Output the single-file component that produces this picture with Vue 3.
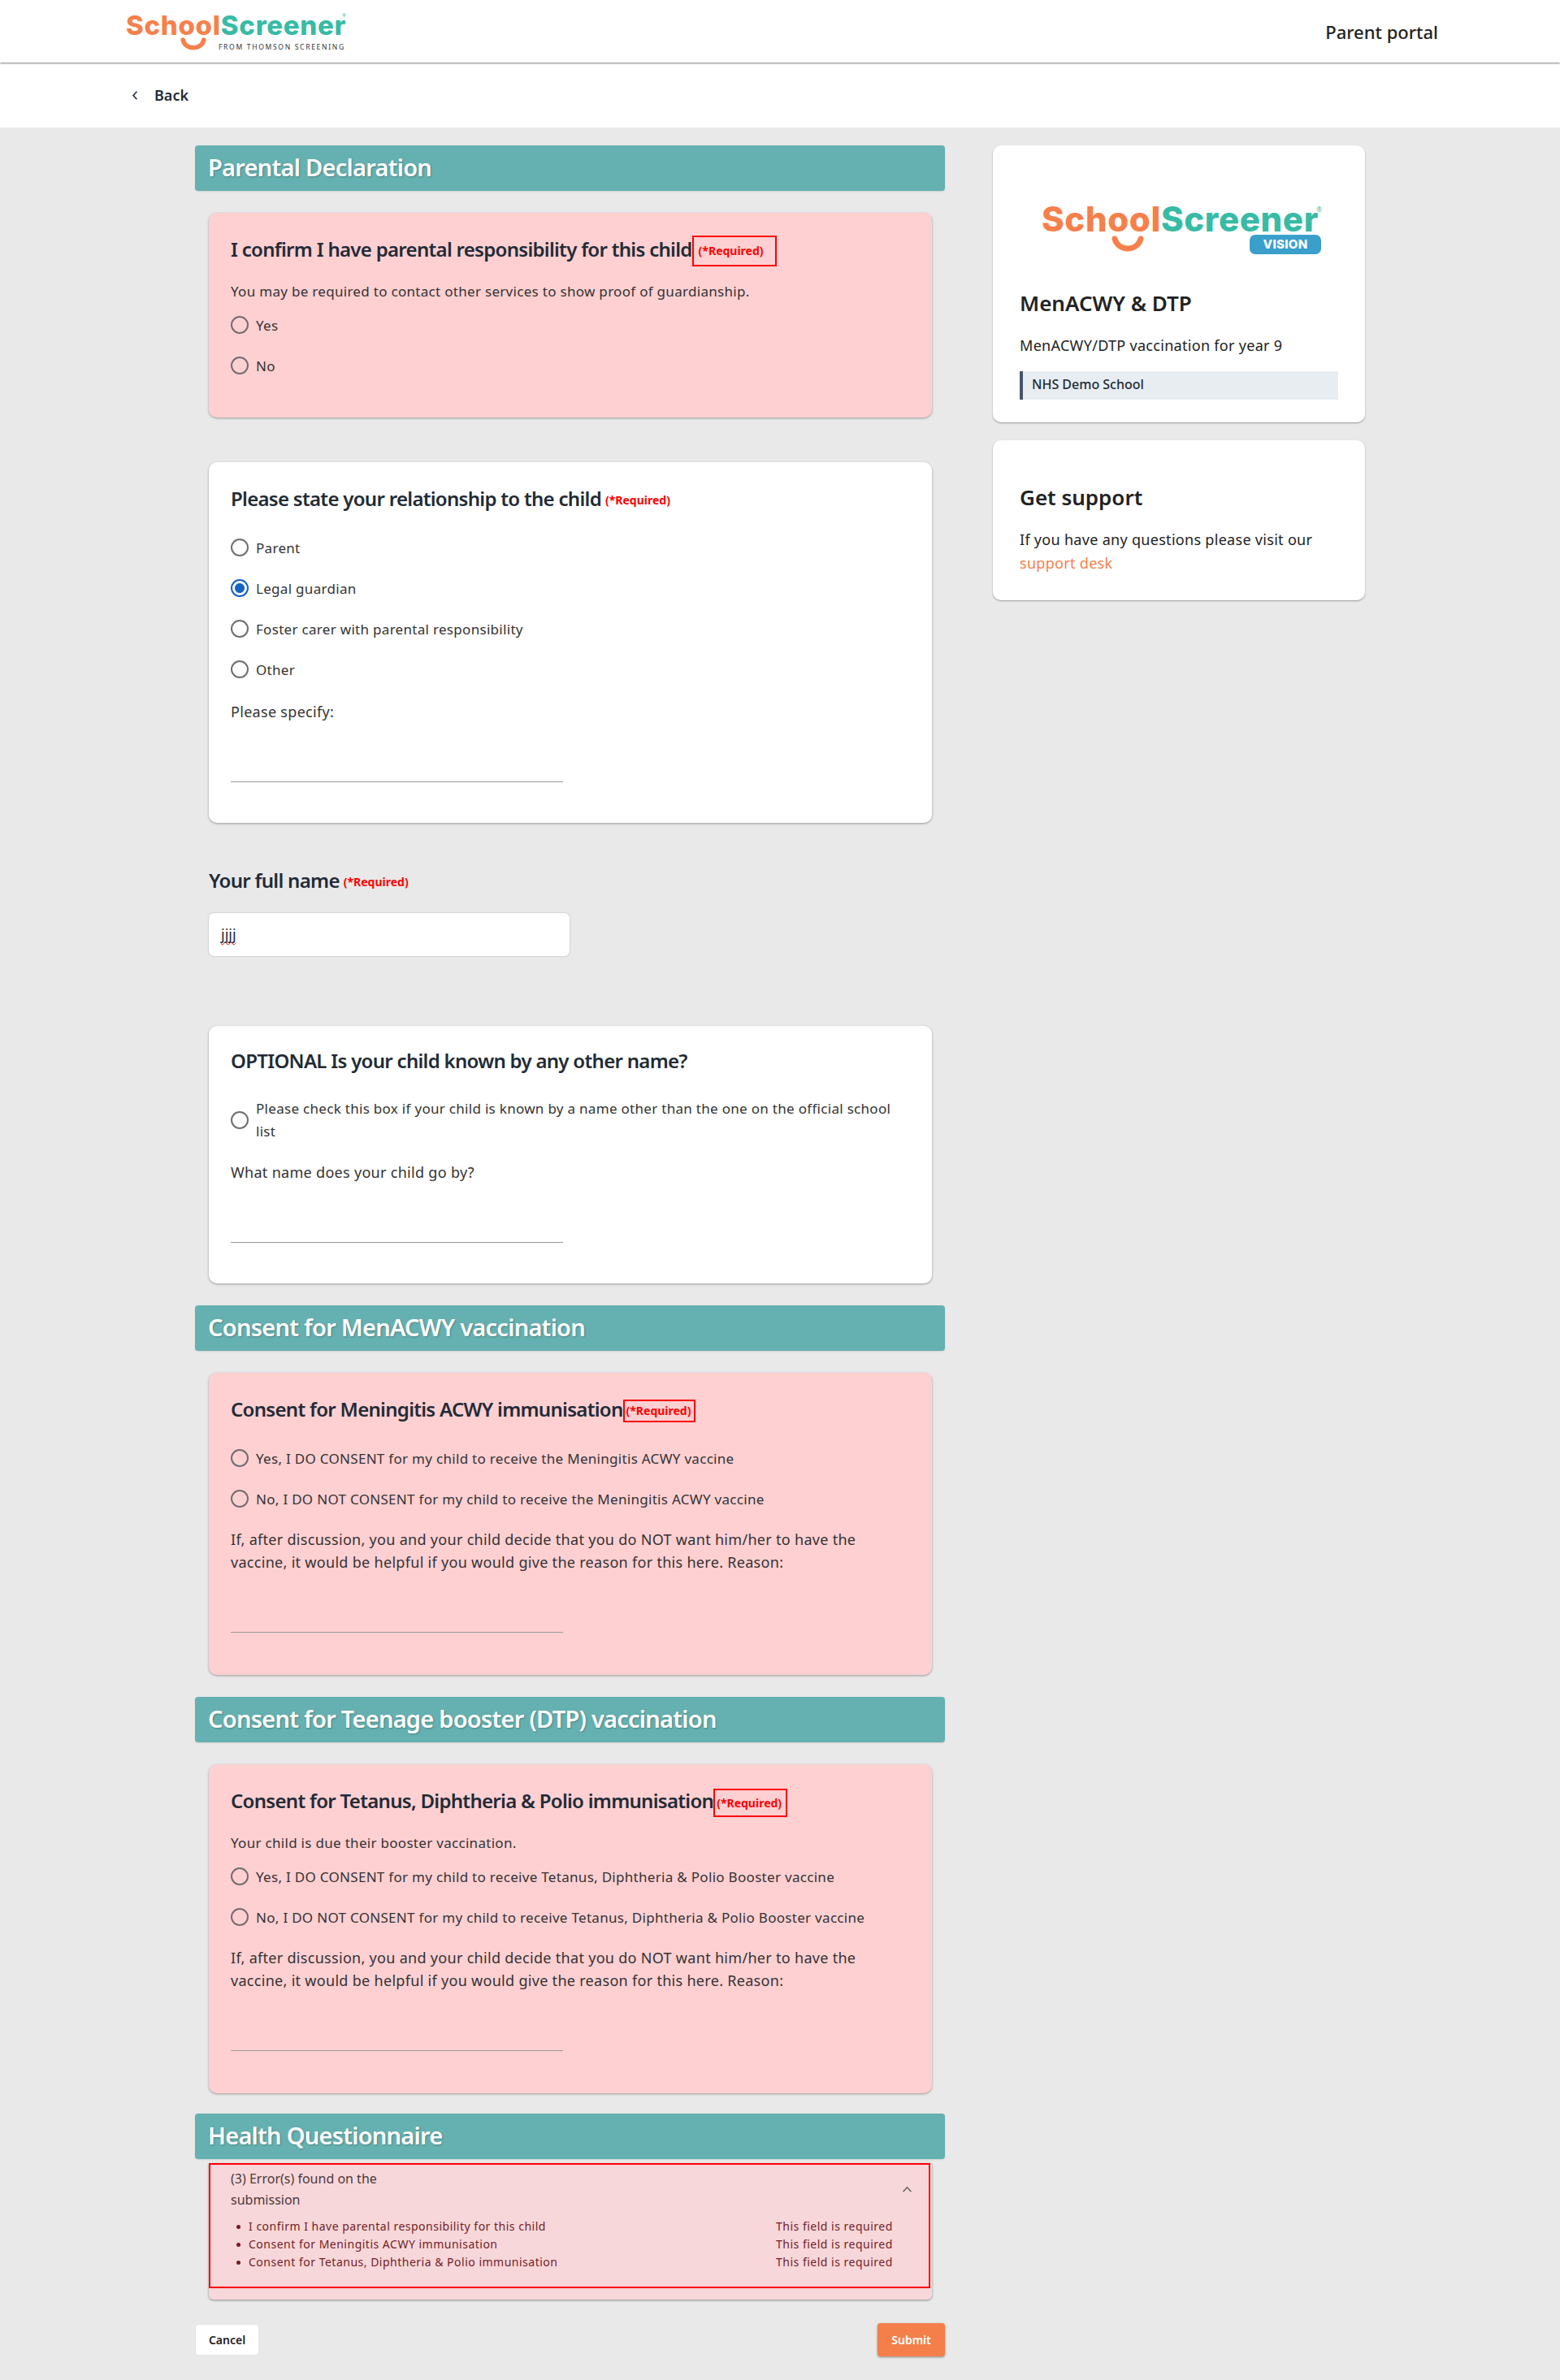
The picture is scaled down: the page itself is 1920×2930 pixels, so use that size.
<template>
  <div class="page">
    <header class="topbar">
      <div class="logo">
        <span class="logo-text"><span class="orange">School</span><span class="teal">Screener</span></span>
        <sup class="reg">®</sup>
        <svg class="smile" viewBox="0 0 40 20"><path d="M4 4C8 20 32 20 36 4" fill="none" stroke="#f6804c" stroke-width="7" stroke-linecap="round"/></svg>
        <span class="logo-from">FROM THOMSON SCREENING</span>
      </div>
      <div class="portal">Parent portal</div>
    </header>
    <nav class="backbar">
      <svg class="back-icon" viewBox="0 0 10 16" width="8" height="13"><path d="M8 2L2.500 8L8 14" fill="none" stroke="#1f2d3d" stroke-width="2"/></svg>
      <span>Back</span>
    </nav>

    <main class="layout">
      <div class="form">
        <h2 class="band">Parental Declaration</h2>
        <section class="card error first">
          <h3 class="q">I confirm I have parental responsibility for this child<span class="req boxed">(*Required)</span></h3>
          <p class="desc">You may be required to contact other services to show proof of guardianship.</p>
          <div class="options tight">
            <label v-for="o in ['Yes', 'No']" :key="o" class="opt"><span class="radio"></span>{{ o }}</label>
          </div>
        </section>

        <section class="card second">
          <h3 class="q">Please state your relationship to the child<span class="req">(*Required)</span></h3>
          <div class="options">
            <label v-for="o in relations" :key="o" class="opt"><span class="radio" :class="{ on: o === 'Legal guardian' }"></span>{{ o }}</label>
          </div>
          <p class="field-label">Please specify:</p>
          <div class="line"></div>
        </section>

        <h3 class="q name-q">Your full name<span class="req">(*Required)</span></h3>
        <div class="name-input"><span class="typo">jjjj</span></div>

        <section class="card third">
          <h3 class="q">OPTIONAL Is your child known by any other name?</h3>
          <label class="opt two-line">
            <span class="radio"></span>
            <span>Please check this box if your child is known by a name other than the one on the official school list</span>
          </label>
          <p class="field-label wide">What name does your child go by?</p>
          <div class="line"></div>
        </section>

        <h2 class="band">Consent for MenACWY vaccination</h2>
        <section class="card error">
          <h3 class="q">Consent for Meningitis ACWY immunisation<span class="req boxed small">(*Required)</span></h3>
          <div class="options">
            <label v-for="o in menOptions" :key="o" class="opt"><span class="radio"></span>{{ o }}</label>
          </div>
          <p class="field-label reason">{{ reasonText }}</p>
          <div class="line"></div>
        </section>

        <h2 class="band">Consent for Teenage booster (DTP) vaccination</h2>
        <section class="card error last">
          <h3 class="q">Consent for Tetanus, Diphtheria &amp; Polio immunisation<span class="req boxed mid">(*Required)</span></h3>
          <p class="desc">Your child is due their booster vaccination.</p>
          <div class="options tight">
            <label v-for="o in dtpOptions" :key="o" class="opt"><span class="radio"></span>{{ o }}</label>
          </div>
          <p class="field-label reason">{{ reasonText }}</p>
          <div class="line"></div>
        </section>

        <h2 class="band">Health Questionnaire</h2>
        <section class="summary">
          <div class="summary-box">
            <div class="summary-head">
              <div class="summary-title">(3) Error(s) found on the submission</div>
              <svg viewBox="0 0 14 10" width="13" height="9"><path d="M1.500 8L7 2L12.500 8" fill="none" stroke="#5c5c5c" stroke-width="1.500"/></svg>
            </div>
            <ul class="summary-list">
              <li v-for="e in errors" :key="e"><span>{{ e }}</span><span class="msg">This field is required</span></li>
            </ul>
          </div>
        </section>

        <div class="actions">
          <button type="button" class="btn cancel">Cancel</button>
          <button type="button" class="btn submit">Submit</button>
        </div>
      </div>

      <aside class="side">
        <div class="side-card">
          <div class="logo big">
            <span class="logo-text"><span class="orange">School</span><span class="teal">Screener</span></span>
            <sup class="reg">®</sup>
            <svg class="smile" viewBox="0 0 40 20"><path d="M4 4C8 20 32 20 36 4" fill="none" stroke="#f6804c" stroke-width="7" stroke-linecap="round"/></svg>
            <span class="vision">VISION</span>
          </div>
          <h3 class="side-title">MenACWY &amp; DTP</h3>
          <p class="side-text">MenACWY/DTP vaccination for year 9</p>
          <div class="school">NHS Demo School</div>
        </div>
        <div class="side-card support">
          <h3 class="side-title">Get support</h3>
          <p class="side-text">If you have any questions please visit our <a class="link">support desk</a></p>
        </div>
      </aside>
    </main>
  </div>
</template>

<script setup>
const relations = ['Parent', 'Legal guardian', 'Foster carer with parental responsibility', 'Other']
const menOptions = [
  'Yes, I DO CONSENT for my child to receive the Meningitis ACWY vaccine',
  'No, I DO NOT CONSENT for my child to receive the Meningitis ACWY vaccine',
]
const dtpOptions = [
  'Yes, I DO CONSENT for my child to receive Tetanus, Diphtheria & Polio Booster vaccine',
  'No, I DO NOT CONSENT for my child to receive Tetanus, Diphtheria & Polio Booster vaccine',
]
const reasonText = 'If, after discussion, you and your child decide that you do NOT want him/her to have the vaccine, it would be helpful if you would give the reason for this here. Reason:'
const errors = [
  'I confirm I have parental responsibility for this child',
  'Consent for Meningitis ACWY immunisation',
  'Consent for Tetanus, Diphtheria & Polio immunisation',
]
</script>

<style>
html, body { background: #e9e9e9; }
</style>

<style scoped>
.page { min-height: 2930px; background: #e9e9e9; font-family: "Noto Sans", "Open Sans", sans-serif; color: #222b36; }
.topbar { height: 77px; display: flex; align-items: center; justify-content: space-between; padding: 0 150px 0 155px; background: #fff; box-shadow: 0 1px 2px rgba(0,0,0,0.5); position: relative; }
.portal { font-size: 22px; font-weight: 500; color: #222; }
.backbar { height: 80px; display: flex; align-items: center; gap: 20px; padding-left: 162px; background: #fff; font-size: 18px; font-weight: 600; }

.logo { position: relative; height: 60px; width: 270px; font-size: 33px; }
.logo-text { position: absolute; left: 0; top: 0; font-family: Inter, sans-serif; font-weight: 800; letter-spacing: 0.7px; line-height: 44px; white-space: nowrap; }
.orange { color: #f6804c; }
.teal { color: #38bba6; }
.reg { position: absolute; right: -1px; top: 6px; font-size: 6px; line-height: 8px; color: #38bba6; }
.smile { position: absolute; left: 67px; top: 37px; width: 32px; height: 16px; }
.logo-from { position: absolute; left: 114px; top: 43px; font-size: 8.500px; letter-spacing: 1.700px; line-height: 12px; white-space: nowrap; color: #333; }
.logo.big { width: 344px; height: 70px; font-size: 42px; margin: 0 0 0 27px; }
.logo.big .logo-text { top: -5px; line-height: 54px; letter-spacing: 0.6px; }
.logo.big .reg { top: 6px; font-size: 8px; }
.logo.big .smile { left: 86px; top: 42px; width: 40px; height: 20px; }
.vision { position: absolute; right: 0; top: 41px; width: 88px; height: 24px; border-radius: 7px; background: #3a9fcb; color: #fff; font-family: Inter, sans-serif; font-weight: 800; font-size: 15px; line-height: 24px; text-align: center; letter-spacing: 0.300px; }

.layout { width: 1440px; margin: 0 auto; padding-top: 22px; display: flex; gap: 59px; align-items: flex-start; }
.form { width: 923px; flex: none; }
.side { width: 458px; flex: none; display: flex; flex-direction: column; gap: 22px; }

.band { height: 56px; margin: 0; padding-left: 16px; background: #65b0b0; border-radius: 4px; color: #fff; font-size: 29px; font-weight: 600; line-height: 54px; text-shadow: 1px 1px 2px rgba(0,0,0,0.25); letter-spacing: -0.75px; box-shadow: 0 1px 2px rgba(0,0,0,0.1); }
.card { width: 890px; margin: 27px 0 27px 17px; padding: 28px 28px 52px 27px; box-sizing: border-box; background: #fff; border-radius: 10px; box-shadow: 0 1px 3px rgba(0,0,0,0.35); }
.card.error { background: #ffd0d2; }
.card.first { padding-bottom: 39px; }
.card.second { margin-top: 55px; margin-bottom: 54px; padding-bottom: 50px; }
.card.third { margin-top: 86px; padding-top: 26px; padding-bottom: 50px; }
.card.last { margin-bottom: 25px; }
.q { display: flex; align-items: center; height: 32px; margin: 0; font-size: 24px; font-weight: 600; color: #222b36; letter-spacing: -0.7px; white-space: nowrap; }
.req { margin-left: 5px; margin-top: 4px; font-size: 14px; font-weight: 700; color: #f00; letter-spacing: 0; }
.req.boxed { margin: 6px 0 0; padding: 0 14px 0 6px; height: 38px; box-sizing: border-box; line-height: 34px; border: 2px solid #f00; }
.req.boxed.small { padding: 0 4px 0 2px; height: 28px; line-height: 24px; }
.req.boxed.mid { padding: 0 5px 0 2px; height: 35px; line-height: 31px; }
.desc { margin: 23px 0 0; font-size: 17px; letter-spacing: 0.3px; line-height: 28px; color: #333; }
.options { margin-top: 20px; }
.options.tight { margin-top: 2px; }
.opt { display: flex; align-items: center; gap: 9px; height: 50px; font-size: 17px; letter-spacing: 0.3px; color: #333; }
.opt.two-line { height: 56px; margin-top: 30px; line-height: 28px; }
.radio { flex: none; width: 22px; height: 22px; box-sizing: border-box; border: 2px solid #6f6f6f; border-radius: 50%; }
.radio.on { border-color: #1565c0; background: radial-gradient(circle, #1565c0 0 5.500px, transparent 6.500px); }
.field-label { margin: 13px 0 0; font-size: 18px; letter-spacing: 0.3px; line-height: 28px; color: #333; max-width: 790px; }
.field-label.wide { margin-top: 22px; }
.field-label.reason { margin-top: 11px; }
.line { width: 409px; height: 1px; margin-top: 72px; background: #9a9a9a; }
.name-q { margin-left: 17px; }
.name-input { width: 444px; height: 53px; margin: 25px 0 0 17px; padding-left: 15px; box-sizing: border-box; background: #fff; border-radius: 6px; box-shadow: 0 0 2px rgba(0,0,0,0.3); font-size: 18px; line-height: 53px; }
.typo { text-decoration: underline wavy #e00; text-decoration-thickness: 1px; text-decoration-skip-ink: none; text-underline-offset: 2px; }

.summary { width: 890px; margin: 5px 0 0 17px; padding-bottom: 14px; background: #f8d7da; border-radius: 0 0 6px 6px; box-shadow: 0 1px 3px rgba(0,0,0,0.4); }
.summary-box { box-sizing: border-box; width: 888px; height: 154px; padding: 4px 20px 0 25px; border: 2px solid #f00; color: #721c24; }
.summary-head { display: flex; align-items: center; justify-content: space-between; color: #4b3a3c; }
.summary-title { width: 220px; font-size: 16px; line-height: 26px; }
.summary-list { margin: 9px 24px 0 0; padding-left: 22px; font-size: 14px; letter-spacing: 0.5px; line-height: 22px; }
.summary-list li { position: relative; display: flex; justify-content: space-between; }
.summary-list li::before { content: ""; position: absolute; left: -15px; top: 9px; width: 5px; height: 5px; border-radius: 50%; background: #721c24; }
.msg { width: 144px; white-space: nowrap; }

.actions { display: flex; justify-content: space-between; align-items: center; margin-top: 29px; padding-left: 1px; }
.btn { border: 0; font: inherit; font-size: 14px; font-weight: 600; }
.cancel { width: 77px; height: 37px; background: #fff; border-radius: 3px; color: #222; box-shadow: 0 0 1px rgba(0,0,0,0.2); }
.submit { width: 83px; height: 41px; background: #f47f4b; border-radius: 4px; color: #fff; box-shadow: 0 1px 3px rgba(0,0,0,0.4); }

.side-card { height: 341px; box-sizing: border-box; padding: 69px 33px 0; background: #fff; border-radius: 10px; box-shadow: 0 1px 2px rgba(0,0,0,0.35); }
.side-card.support { height: 197px; padding-top: 52px; }
.side-title { margin: 37px 0 0; font-size: 26px; font-weight: 600; line-height: 36px; color: #222; }
.support .side-title { margin-top: 0; }
.side-text { margin: 20px 0 0; font-size: 18px; letter-spacing: 0.3px; line-height: 29px; color: #222; }
.school { height: 35px; margin-top: 17px; padding-left: 11px; border-left: 4px solid #44546a; background: #e8edf2; font-size: 16px; font-weight: 500; line-height: 33px; }
.link { color: #f6804c; }
</style>
